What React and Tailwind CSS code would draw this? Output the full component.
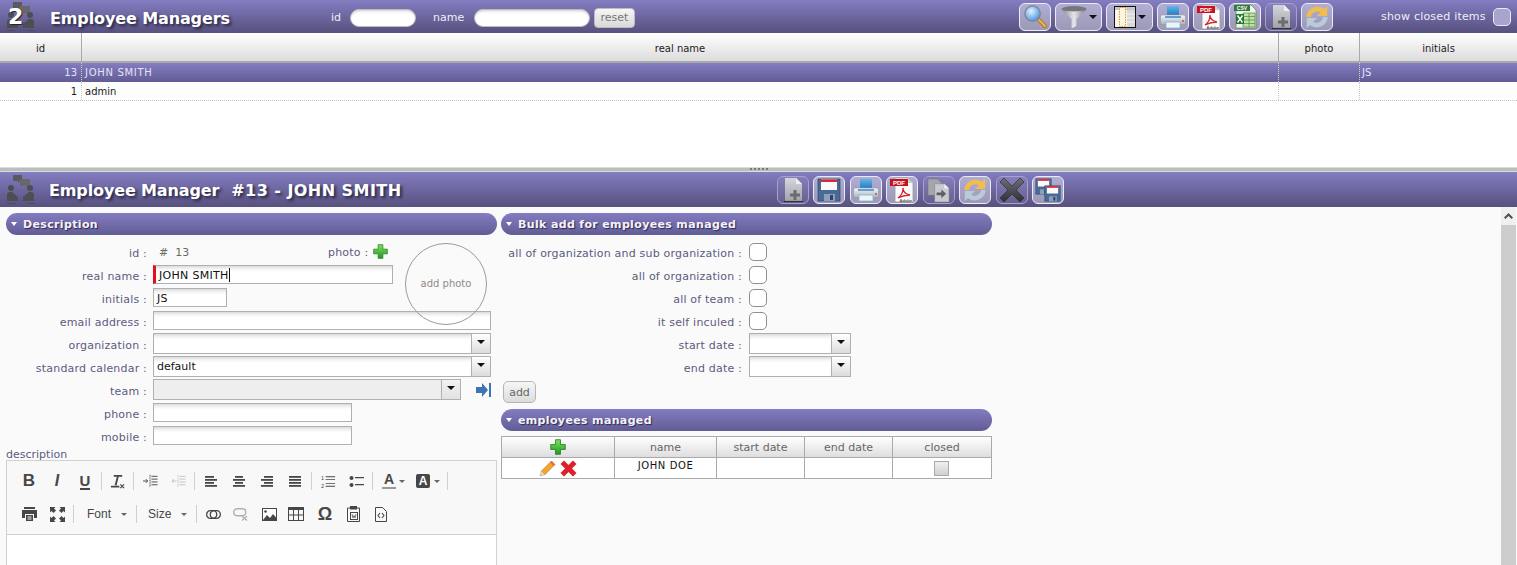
const purple = 'bg-linear-to-b from-[#837dc2] to-[#57517f]'
const softPurple = 'bg-linear-to-b from-[#837dc2] to-[#625c94]'
const titleShadow = '[text-shadow:2px_2px_3px_#26233f]'
const labelText = 'text-[11px] text-[#5c5a80] tracking-[.2px]'

function Plus({ className = 'w-4 h-4' }) {
  return (
    <svg viewBox="0 0 16 16" className={className}>
      <defs>
        <linearGradient id="plusg" x1="0" y1="0" x2="0" y2="1">
          <stop offset="0" stopColor="#7fe05a" />
          <stop offset="1" stopColor="#1f9a25" />
        </linearGradient>
      </defs>
      <path d="M5.500 .7h5v4.800h4.800v5h-4.800v4.800h-5v-4.800H.7v-5h4.800z" fill="url(#plusg)" stroke="#2a7a2a" strokeWidth=".8" />
    </svg>
  )
}

function Lens() {
  return (
    <svg viewBox="0 0 26 26" className="w-[25px] h-[25px]">
      <defs>
        <radialGradient id="lensg" cx=".4" cy=".35" r=".7">
          <stop offset="0" stopColor="#e4f3ff" />
          <stop offset="1" stopColor="#3f8fe0" />
        </radialGradient>
      </defs>
      <path d="M15 15l8 8" stroke="#b07a1c" strokeWidth="4" strokeLinecap="round" />
      <path d="M16.500 16.500l6.500 6.500" stroke="#f1b84a" strokeWidth="2" strokeLinecap="round" />
      <circle cx="10" cy="10" r="8" fill="url(#lensg)" stroke="#7d8aa0" strokeWidth="1.600" />
    </svg>
  )
}

function Funnel() {
  return (
    <svg viewBox="0 0 26 24" className="w-[26px] h-[24px]">
      <defs>
        <linearGradient id="fung" x1="0" y1="0" x2="1" y2="0">
          <stop offset="0" stopColor="#85838b" />
          <stop offset=".5" stopColor="#e6e6ea" />
          <stop offset="1" stopColor="#7a7980" />
        </linearGradient>
      </defs>
      <ellipse cx="13" cy="4" rx="12.500" ry="3" fill="#77767c" />
      <path d="M.5 4.500c2.500 2.500 4 4 10 9.500v9.500l5-2.500v-7c6-5.500 7.500-7 10-9.500-4 2.500-21 2.500-25 0z" fill="url(#fung)" />
    </svg>
  )
}

function Columns() {
  return (
    <svg viewBox="0 0 22 22" className="w-[22px] h-[22px]">
      <rect x=".5" y=".5" width="21" height="21" fill="#f6f6f2" stroke="#111" />
      <rect x="1" y="1" width="20" height="3" fill="#c9c9c9" />
      <rect x="13" y="4" width="8" height="17" fill="#d9d9d9" />
      <path d="M13 8h8M13 12h8M13 16h8" stroke="#f4f4f4" />
      <rect x="5.500" y="1.500" width="6" height="19" fill="#fbf6e2" stroke="#e29a1a" strokeDasharray="1.500 1" />
    </svg>
  )
}

function Printer() {
  return (
    <svg viewBox="0 0 26 24" className="w-[26px] h-[24px]">
      <defs>
        <linearGradient id="prg" x1="0" y1="0" x2="0" y2="1">
          <stop offset="0" stopColor="#62b4ea" />
          <stop offset="1" stopColor="#2a7cc0" />
        </linearGradient>
        <linearGradient id="prb" x1="0" y1="0" x2="0" y2="1">
          <stop offset="0" stopColor="#f5f7f8" />
          <stop offset="1" stopColor="#a9b4bc" />
        </linearGradient>
      </defs>
      <path d="M7 1h12v9H7z" fill="url(#prg)" />
      <path d="M2 10h22q1.500 0 1.500 2v6q0 1.500-1.500 1.500H2Q.5 19.500.5 18v-6q0-2 1.500-2z" fill="url(#prb)" stroke="#8b99a4" strokeWidth=".6" />
      <path d="M6 17h14v6H6z" fill="#eef3f6" stroke="#7fb2d6" strokeWidth=".8" />
      <path d="M5 12h16" stroke="#3a84c4" strokeWidth="1.500" />
      <circle cx="23" cy="16" r=".9" fill="#d33" />
    </svg>
  )
}

function Pdf() {
  return (
    <svg viewBox="0 0 26 26" className="w-[26px] h-[26px]">
      <path d="M6 1h13l5 5v19H6z" fill="#fbfbfb" stroke="#9b9b9b" strokeWidth=".8" />
      <path d="M19 1v5h5z" fill="#d0d0d0" />
      <rect x="1" y="2" width="18" height="7" fill="#c8131f" />
      <text x="10" y="8" textAnchor="middle" fontSize="6" fontWeight="700" fill="#fff" fontFamily="Liberation Sans, sans-serif">PDF</text>
      <path d="M9 21c3-2 5-6 5-10 0 4 2 6 7 7-4 0-8 1-12 3z" fill="none" stroke="#d3232c" strokeWidth="1.300" />
      <text x="23" y="25" textAnchor="end" fontSize="4" fontWeight="700" fill="#555" fontFamily="Liberation Sans, sans-serif">Adobe</text>
    </svg>
  )
}

function Csv() {
  return (
    <svg viewBox="0 0 26 26" className="w-[26px] h-[26px]">
      <path d="M4 1h15l5 5v18H4z" fill="#f3f6ee" stroke="#6d8c5d" strokeWidth=".8" />
      <rect x="2" y="1" width="16" height="6" fill="#2d7a3a" />
      <text x="10" y="6.300" textAnchor="middle" fontSize="5" fontWeight="700" fill="#fff" fontFamily="Liberation Sans, sans-serif">CSV</text>
      <path d="M11 9h12v14H11z" fill="#bfe0a8" stroke="#4f8a3f" strokeWidth=".7" />
      <path d="M11 12.500h12M11 16h12M11 19.500h12M17 9v14" stroke="#4f8a3f" strokeWidth=".7" />
      <path d="M4 10h8v10H4z" fill="#1f7a2f" />
      <path d="M5.500 11.500l5 7M10.500 11.500l-5 7" stroke="#fff" strokeWidth="1.400" />
    </svg>
  )
}

function NewDoc() {
  return (
    <svg viewBox="0 0 24 26" className="w-[24px] h-[26px]">
      <defs>
        <linearGradient id="ndg" x1="0" y1="0" x2="0" y2="1">
          <stop offset="0" stopColor="#d5d5dc" />
          <stop offset="1" stopColor="#a3a3ac" />
        </linearGradient>
      </defs>
      <path d="M4 1h11l6 6v17H4z" fill="url(#ndg)" />
      <path d="M15 1v6h6z" fill="#efeff2" />
      <path d="M3 24.500h19" stroke="#333" strokeWidth="1.200" />
      <path d="M12.500 13h3v3.500H19v3h-3.500V23h-3v-3.500H9v-3h3.500z" fill="#6c6c72" />
    </svg>
  )
}

function Refresh() {
  return (
    <svg viewBox="0 0 28 28" className="w-[26px] h-[26px]" fill="none">
      <path d="M5 14A9.500 9.500 0 0 1 20.500 7.500" stroke="#f2bd4f" strokeWidth="5" />
      <path d="M25 2v11H14z" fill="#f2bd4f" />
      <path d="M23 14A9.500 9.500 0 0 1 7.500 20.500" stroke="#b9cad9" strokeWidth="5" />
      <path d="M3 26V15h11z" fill="#b9cad9" />
    </svg>
  )
}

function Floppy({ className = 'w-[24px] h-[24px]' }) {
  return (
    <svg viewBox="0 0 24 24" className={className}>
      <path d="M1 1h22v22H1z" fill="#4a6a96" stroke="#2f4568" strokeWidth=".7" />
      <path d="M4 1.500h16V12H4z" fill="#fafafa" />
      <path d="M4 1.500h16V4H4z" fill="#d82a36" />
      <path d="M7 16h11v7H7z" fill="#8ba0bb" />
      <path d="M13 17h3v5h-3z" fill="#2f4568" />
    </svg>
  )
}

function CopyDoc() {
  return (
    <svg viewBox="0 0 26 26" className="w-[25px] h-[25px]">
      <path d="M2 1h10l4 4v13H2z" fill="#a5a5ae" stroke="#6f6f78" strokeWidth=".5" />
      <path d="M9 6h10l5 5v14H9z" fill="#c9c9d0" stroke="#77777f" strokeWidth=".5" />
      <path d="M19 6v5h5z" fill="#efeff2" />
      <path d="M11 15h5v-3l5 4.500-5 4.500v-3h-5z" fill="#5e5e66" />
    </svg>
  )
}

function BigX() {
  return (
    <svg viewBox="0 0 26 26" className="w-[26px] h-[26px]">
      <defs>
        <linearGradient id="bxg" x1="0" y1="0" x2="0" y2="1">
          <stop offset="0" stopColor="#6e6e76" />
          <stop offset="1" stopColor="#2e2e36" />
        </linearGradient>
      </defs>
      <path d="M5 1l8 8 8-8 4 4-8 8 8 8-4 4-8-8-8 8-4-4 8-8-8-8z" fill="url(#bxg)" stroke="#25252c" strokeWidth=".6" />
    </svg>
  )
}

function MultiSave() {
  return (
    <div className="relative w-[26px] h-[24px]">
      <Floppy className="absolute left-0 top-0 w-[17px] h-[17px]" />
      <Floppy className="absolute right-0 bottom-0 w-[17px] h-[17px]" />
    </div>
  )
}

function Caret({ className = 'border-t-[#111]' }) {
  return <span className={`w-0 h-0 border-x-[4px] border-x-transparent border-t-[4px] ${className}`} />
}

function SmallCaret({ className = '' }) {
  return <span className={`w-0 h-0 shrink-0 border-x-[3px] border-x-transparent border-t-[3px] border-t-[#666] ${className}`} />
}

function ToolBtn({ children, dim, wide }) {
  return (
    <div className={`${wide ? 'w-[47px] gap-[2px]' : 'w-[32px]'} h-[28px] rounded-[6px] border flex items-center justify-center shrink-0 ${dim ? 'border-[#a6a2cb] bg-[#ffffff10]' : 'border-[#ecebf5] bg-[#ffffff66]'}`}>
      {children}
    </div>
  )
}

function PeopleIcon() {
  return (
    <svg viewBox="0 0 30 30" className="w-[30px] h-[30px]" fill="#4e4e52">
      <path d="M7 0h9v6h-2l-2 2V6H7z" fill="#5a5a5e" />
      <path d="M14 4h10v7h-2v2l-2-2h-6z" fill="#68686c" />
      <circle cx="5" cy="13" r="3" />
      <circle cx="24" cy="13" r="3" />
      <path d="M1 26v-6q0-3 3-3h2l6 5v4z" />
      <path d="M28 26v-6q0-3-3-3h-2l-6 5v4z" />
      <path d="M1 28h8v1H1zM21 28h8v1h-8z" />
      <circle cx="14.500" cy="25" r=".6" />
    </svg>
  )
}

function ColHead({ className, children }) {
  return (
    <div className={`h-full flex items-center justify-center pt-[3px] text-[10px] text-[#222] border-r border-[#a9a9a9] last:border-r-0 ${className}`}>
      {children}
    </div>
  )
}

function GridRow({ id, name, initials, selected }) {
  const cell = selected ? 'border-[#d9d2b0]' : 'border-[#c8c4b8]'
  return (
    <div className={`flex h-[19px] text-[10px] ${selected ? `${softPurple} text-[#e6e4f4]` : 'bg-[#fdfdfd] text-[#222] border-b border-dotted border-[#c8c4b8]'}`}>
      <div className={`w-[82px] pr-[4px] text-right leading-[19px] border-r border-dotted ${cell}`}>{id}</div>
      <div className={`flex-1 pl-[3px] leading-[19px] border-r border-dotted ${cell} ${selected ? 'tracking-[.7px]' : ''}`}>{name}</div>
      <div className={`w-[81px] border-r border-dotted ${cell}`} />
      <div className="w-[157px] pl-[2px] leading-[19px]">{initials}</div>
    </div>
  )
}

function Section({ title }) {
  return (
    <div className={`h-[22px] rounded-[11px] ${softPurple} flex items-center pl-[5px] text-[11px] font-bold text-[#f4f3fb] tracking-[.35px] [text-shadow:1px_1px_1px_#2e2a50]`}>
      <span className="w-0 h-0 border-x-[3px] border-x-transparent border-t-[4px] border-t-white mr-[6px]" />
      <span className="pt-[2px]">{title}</span>
    </div>
  )
}

function Field({ className = '', children, required }) {
  return (
    <div className={`h-[19px] border border-[#b0b0b0] bg-white shadow-[inset_0_5px_5px_-4px_#c8c8c8] text-[11px] tracking-[.3px] text-[#111] leading-[17px] pl-[4px] pt-[1px] flex items-center ${required ? 'border-l-[3px] border-l-[#e0101c]' : ''} ${className}`}>
      {children}
    </div>
  )
}

function Select({ className = '', value, disabled, arrowBg = 'from-white to-[#dcdcdc]' }) {
  return (
    <div className={`h-[21px] border border-[#b0b0b0] flex text-[11px] text-[#111] ${disabled ? 'bg-[#eeeeee]' : 'bg-white shadow-[inset_0_5px_5px_-4px_#c8c8c8]'} ${className}`}>
      <div className="flex-1 pl-[3px] leading-[20px]">{value}</div>
      <div className={`w-[19px] border-l border-[#b0b0b0] bg-linear-to-b ${arrowBg} flex items-center justify-center pb-[3px]`}>
        <Caret />
      </div>
    </div>
  )
}

function FormRow({ label, children }) {
  return (
    <div className="h-[23px] flex items-center">
      <div className={`w-[141px] pt-[5px] text-right shrink-0 ${labelText}`}>{label} :</div>
      <div className="ml-[6px] flex items-center flex-1">{children}</div>
    </div>
  )
}

function BulkRow({ label, children }) {
  return (
    <div className="h-[23px] flex items-center">
      <div className={`w-[241px] pt-[5px] text-right shrink-0 ${labelText}`}>{label} :</div>
      <div className="ml-[7px] flex items-center">{children}</div>
    </div>
  )
}

function Check() {
  return <div className="w-[18px] h-[18px] mt-[1px] rounded-[5px] border border-[#8f8f8f] bg-white" />
}

function Lines({ rows }) {
  return (
    <svg viewBox="0 0 14 14" className="w-[14px] h-[14px]" fill="#474747">
      {rows.map((r, i) => (
        <rect key={i} x={r[0]} y={r[1]} width={r[2]} height="1.800" />
      ))}
    </svg>
  )
}

function Ed({ children, w = 'w-[28px]' }) {
  return <div className={`${w} h-[24px] flex items-center justify-center shrink-0`}>{children}</div>
}

function Sep({ ml = '' }) {
  return <div className={`w-px h-[18px] bg-[#cfcfcf] shrink-0 ${ml}`} />
}

function Indent({ faded, out }) {
  return (
    <svg viewBox="0 0 16 14" className={`w-[15px] h-[14px] ${faded ? 'opacity-30' : ''}`} fill="none" stroke="#474747" strokeWidth="1">
      <path d="M7.500 .5v13" strokeDasharray="1.200 .6" />
      <path d="M9 2h6.500M9 5h6.500M9 8h6.500M9 11h6.500" />
      {out ? <path d="M6 7H1M3 5L1 7l2 2" /> : <path d="M0 7h5M3 5l2 2-2 2" />}
    </svg>
  )
}

function EditorToolbar() {
  const glyph = "font-['Liberation_Sans'] font-bold text-[#474747]"
  return (
    <div className="h-[74px] bg-[#f8f8f8] border-b border-[#d1d1d1] pl-[8px] pt-[8px] flex flex-col gap-[9px] text-[#474747]">
      <div className="flex items-center">
        <Ed><span className={`${glyph} text-[17px]`}>B</span></Ed>
        <Ed><span className={`${glyph} text-[16px] italic`}>I</span></Ed>
        <Ed><span className={`${glyph} text-[15px] leading-[15px] border-b-2 border-[#474747]`}>U</span></Ed>
        <Sep ml="ml-[2px]" />
        <Ed w="w-[31px]">
          <svg viewBox="0 0 16 16" className="w-[15px] h-[15px]" fill="none" stroke="#474747">
            <path d="M4 2h9M8.500 2L6 12M1 13.500h9" strokeWidth="2" />
            <path d="M11 11l4 4M15 11l-4 4" strokeWidth="1.300" />
          </svg>
        </Ed>
        <Sep />
        <Ed w="w-[32px]"><Indent /></Ed>
        <Ed w="w-[24px]"><Indent faded out /></Ed>
        <Sep ml="ml-[4px]" />
        <div className="ml-[2px] flex">
          <Ed><Lines rows={[[1, 2, 9], [1, 5, 12], [1, 8, 9], [1, 11, 12]]} /></Ed>
          <Ed><Lines rows={[[3, 2, 8], [1, 5, 12], [3, 8, 8], [1, 11, 12]]} /></Ed>
          <Ed><Lines rows={[[4, 2, 9], [1, 5, 12], [4, 8, 9], [1, 11, 12]]} /></Ed>
          <Ed><Lines rows={[[1, 2, 12], [1, 5, 12], [1, 8, 12], [1, 11, 12]]} /></Ed>
        </div>
        <Sep ml="ml-[2px]" />
        <Ed w="w-[32px]">
          <svg viewBox="0 0 16 14" className="w-[15px] h-[14px]" fill="#474747">
            <text x="0" y="6" fontSize="6" fontFamily="Liberation Sans, sans-serif">1</text>
            <text x="0" y="14" fontSize="6" fontFamily="Liberation Sans, sans-serif">2</text>
            <path d="M5 2h10v1H5zM5 5h10v1H5zM5 9h10v1H5zM5 12h10v1H5z" />
          </svg>
        </Ed>
        <Ed w="w-[24px]">
          <svg viewBox="0 0 15 13" className="w-[15px] h-[13px]" fill="#474747">
            <circle cx="2.500" cy="3" r="2" />
            <circle cx="2.500" cy="10" r="2" />
            <path d="M6 2h9v1.200H6zM6 9h9v1.200H6z" />
          </svg>
        </Ed>
        <Sep ml="ml-[4px]" />
        <div className={`ml-[9px] w-[14px] text-center text-[14px] leading-[13px] border-b-2 border-[#9a9a9a] pb-[1px] shrink-0 ${glyph}`}>A</div>
        <SmallCaret className="ml-[3px]" />
        <div className="ml-[11px] w-[14px] h-[14px] rounded-[2px] bg-[#474747] text-white text-[12px] leading-[14px] text-center font-bold font-['Liberation_Sans'] shrink-0">A</div>
        <SmallCaret className="ml-[4px]" />
        <Sep ml="ml-[7px]" />
      </div>
      <div className="flex items-center">
        <Ed>
          <svg viewBox="0 0 15 14" className="w-[15px] h-[14px]" fill="#474747">
            <path d="M2 0h11v2H2zM0 3h15v8h-3V7H3v4H0zM4 8h7v6H4z" />
            <path d="M5.500 10h4M5.500 12h4" stroke="#f8f8f8" />
          </svg>
        </Ed>
        <Ed>
          <svg viewBox="0 0 15 15" className="w-[15px] h-[15px]" fill="#474747">
            <path d="M0 0h5.500L4 1.500l2 2L3.500 6l-2-2L0 5.500zM15 0v5.500L13.500 4l-2 2L9 3.500l2-2L9.500 0zM0 15V9.500L1.500 11l2-2L6 11.500l-2 2L5.500 15zM15 15H9.500L11 13.500l-2-2L11.500 9l2 2L15 9.500z" />
          </svg>
        </Ed>
        <Sep ml="ml-[2px]" />
        <span className="ml-[13px] w-[34px] font-['Liberation_Sans'] text-[12px] shrink-0">Font</span>
        <SmallCaret />
        <Sep ml="ml-[9px]" />
        <span className="ml-[11px] w-[33px] font-['Liberation_Sans'] text-[12px] shrink-0">Size</span>
        <SmallCaret />
        <Sep ml="ml-[9px]" />
        <Ed w="w-[32px]">
          <svg viewBox="0 0 15 9" className="w-[15px] h-[9px]" fill="none" stroke="#474747" strokeWidth="1.300">
            <rect x=".7" y=".7" width="10" height="7.600" rx="3.600" />
            <rect x="4.300" y=".7" width="10" height="7.600" rx="3.600" />
          </svg>
        </Ed>
        <Ed w="w-[22px]">
          <svg viewBox="0 0 15 14" className="w-[15px] h-[14px] opacity-40" fill="none" stroke="#474747" strokeWidth="1.400">
            <rect x=".7" y="1.700" width="12" height="7" rx="3.400" />
            <path d="M9 9l5 4.500M14 9l-5 4.500" />
          </svg>
        </Ed>
        <Ed w="w-[36px]">
          <svg viewBox="0 0 15 13" className="w-[15px] h-[13px]">
            <rect x=".5" y=".5" width="14" height="12" fill="#fff" stroke="#474747" />
            <path d="M1 12l4-5 3 3 3-4 3 3.500V12z" fill="#474747" />
            <circle cx="3.500" cy="3.500" r="1.300" fill="#474747" />
          </svg>
        </Ed>
        <Ed w="w-[18px]">
          <svg viewBox="0 0 16 14" className="w-[16px] h-[14px] shrink-0" fill="none" stroke="#474747">
            <rect x=".5" y=".5" width="15" height="13" />
            <path d="M0 1.500h16" strokeWidth="3" />
            <path d="M0 8h16M5.500 3v11M10.500 3v11" />
          </svg>
        </Ed>
        <Ed w="w-[40px]"><span className={`${glyph} text-[18px] leading-[18px]`}>Ω</span></Ed>
        <Ed w="w-[16px]">
          <svg viewBox="0 0 13 16" className="w-[13px] h-[16px] shrink-0" fill="none" stroke="#474747">
            <path d="M3 2H.5v13.500h12V2H10" />
            <rect x="3.500" y=".5" width="6" height="2.500" fill="#474747" />
            <rect x="3.500" y="6.500" width="7" height="7" />
            <path d="M5 8l1 4 1-2.500L8 12l1-4" strokeWidth=".7" />
          </svg>
        </Ed>
        <Ed w="w-[40px]">
          <svg viewBox="0 0 12 15" className="w-[12px] h-[15px]" fill="none" stroke="#474747">
            <path d="M.5.5h7l4 4v10H.5z" />
            <path d="M5 6L3 8.500 5 11M7 6l2 2.500L7 11" strokeWidth="1.100" />
          </svg>
        </Ed>
      </div>
    </div>
  )
}

function ManagedTable() {
  const th = 'h-full flex items-center justify-center pt-[3px] border-r border-[#aaaaaa] last:border-r-0'
  const td = 'h-full border-r border-[#aaaaaa] last:border-r-0'
  return (
    <div className="mt-[5px] border border-[#aaaaaa] text-[11px]">
      <div className="h-[21px] flex bg-linear-to-b from-white to-[#dedede] border-b border-[#aaaaaa] text-[#666]">
        <div className="h-full flex items-center justify-center border-r border-[#aaaaaa] w-[113px]"><Plus className="w-[16px] h-[16px]" /></div>
        <div className={`${th} w-[102px]`}>name</div>
        <div className={`${th} w-[88px]`}>start date</div>
        <div className={`${th} w-[88px]`}>end date</div>
        <div className={`${th} flex-1`}>closed</div>
      </div>
      <div className="h-[20px] flex bg-white">
        <div className={`${td} w-[113px] flex items-center justify-center gap-[4px]`}>
          <svg viewBox="0 0 17 17" className="w-[17px] h-[17px]">
            <path d="M12.500 1l3.500 3.500L6 14.500 2.500 11z" fill="#f2a632" stroke="#c47a16" strokeWidth=".7" />
            <path d="M12.500 1l3.500 3.500-1.500 1.500L11 2.500z" fill="#e86a4a" />
            <path d="M2.500 11L1 16l5-1.500z" fill="#f3dcb4" stroke="#b08a50" strokeWidth=".5" />
          </svg>
          <svg viewBox="0 0 17 17" className="w-[17px] h-[17px]">
            <path d="M4 .8l4.500 4.500L13 .8l3.200 3.200-4.500 4.500 4.500 4.500-3.200 3.200-4.500-4.500L4 16.200.8 13l4.500-4.500L.8 4z" fill="#e01f28" stroke="#b5141c" strokeWidth=".5" />
          </svg>
        </div>
        <div className={`${td} w-[102px] text-center text-[10px] tracking-[.6px] text-[#111] leading-[15px]`}>JOHN DOE</div>
        <div className={`${td} w-[88px]`} />
        <div className={`${td} w-[88px]`} />
        <div className={`${td} flex-1 flex items-center justify-center pr-[2px]`}>
          <div className="w-[15px] h-[15px] border border-[#a9a9a9] bg-linear-to-b from-[#f0f0f0] to-[#cfcfcf]" />
        </div>
      </div>
    </div>
  )
}

export default function App() {
  return (
    <div className="h-screen overflow-hidden flex flex-col bg-white [font-family:'DejaVu_Sans',Verdana,sans-serif]">
      {/* list header */}
      <div className={`h-[33px] shrink-0 ${purple} flex items-center text-[11px] text-[#efeef8]`}>
        <div className="relative w-[36px] ml-[6px] shrink-0">
          <PeopleIcon />
          <span className="absolute left-[2px] top-[4px] text-[22px] leading-[22px] font-bold text-white [text-shadow:1px_1px_1px_#222]">2</span>
        </div>
        <div className={`ml-[8px] pt-[4px] w-[281px] text-[16px] tracking-[-.12px] font-bold text-white shrink-0 ${titleShadow}`}>Employee Managers</div>
        <span className="w-[19px] pt-[4px]">id</span>
        <div className="w-[66px] h-[18px] mt-[2px] rounded-full bg-white border border-[#bbb] shadow-[inset_0_3px_3px_-2px_#ccc]" />
        <span className="ml-[17px] w-[41px] pt-[4px]">name</span>
        <div className="w-[116px] h-[18px] mt-[2px] rounded-full bg-white border border-[#bbb] shadow-[inset_0_3px_3px_-2px_#ccc]" />
        <div className="ml-[4px] mt-[2px] w-[41px] h-[20px] rounded-[4px] border border-[#bdbdbd] bg-linear-to-b from-[#f6f6f6] to-[#d8d8d8] text-[#777] text-center leading-[18px]">reset</div>
        <div className="ml-[384px] flex items-center gap-[4px]">
          <ToolBtn><Lens /></ToolBtn>
          <ToolBtn wide><Funnel /><Caret /></ToolBtn>
          <ToolBtn wide><Columns /><Caret /></ToolBtn>
          <ToolBtn><Printer /></ToolBtn>
          <ToolBtn><Pdf /></ToolBtn>
          <ToolBtn><Csv /></ToolBtn>
          <ToolBtn dim><NewDoc /></ToolBtn>
          <ToolBtn><Refresh /></ToolBtn>
        </div>
        <span className="ml-[48px] w-[112px] pt-[2px] tracking-[.2px] whitespace-nowrap">show closed items</span>
        <div className="w-[18px] h-[18px] mt-[1px] rounded-[5px] border border-[#e9e8f3] bg-[#a7a4cd]" />
      </div>

      {/* list */}
      <div className="h-[30px] shrink-0 flex bg-linear-to-b from-white to-[#dcdcdc] border-b-2 border-[#a9a9a9]">
        <ColHead className="w-[82px]">id</ColHead>
        <ColHead className="flex-1">real name</ColHead>
        <ColHead className="w-[81px]">photo</ColHead>
        <ColHead className="w-[157px]">initials</ColHead>
      </div>
      <GridRow id="13" name="JOHN SMITH" initials="JS" selected />
      <GridRow id="1" name="admin" />
      <div className="h-[66px] shrink-0 bg-white" />

      {/* splitter */}
      <div className="h-[5px] shrink-0 bg-[#bdbdbd] border-y border-[#dcdcdc] flex justify-center items-start gap-[2px]">
        {[0, 1, 2, 3, 4].map((i) => <span key={i} className="w-[2px] h-[2px] bg-[#777]" />)}
      </div>

      {/* detail header */}
      <div className={`h-[35px] shrink-0 ${purple} flex items-center`}>
        <div className="ml-[6px] w-[30px] shrink-0"><PeopleIcon /></div>
        <div className={`ml-[13px] pt-[2px] w-[728px] shrink-0 text-[16px] font-bold text-white whitespace-pre ${titleShadow}`}>
          <span className="tracking-[-.13px]">Employee Manager</span>
          <span className="ml-[12px] tracking-[.45px]">#13 - JOHN SMITH</span>
        </div>
        <div className="mt-[1px] flex items-center gap-[4.43px]">
          <ToolBtn dim><NewDoc /></ToolBtn>
          <ToolBtn><Floppy /></ToolBtn>
          <ToolBtn><Printer /></ToolBtn>
          <ToolBtn><Pdf /></ToolBtn>
          <ToolBtn dim><CopyDoc /></ToolBtn>
          <ToolBtn><Refresh /></ToolBtn>
          <ToolBtn dim><BigX /></ToolBtn>
          <ToolBtn><MultiSave /></ToolBtn>
        </div>
      </div>

      {/* detail */}
      <div className="flex-1 min-h-0 flex bg-[#fafafa]">
        <div className="flex-1 min-w-0 flex gap-[4px] pl-[6px] pt-[6px] overflow-hidden">
          <div className="relative w-[491px] shrink-0">
            <Section title="Description" />
            <div className="pt-[5px]">
              <div className="h-[23px] flex items-center">
                <div className={`w-[141px] pt-[5px] text-right shrink-0 ${labelText}`}>id :</div>
                <div className="ml-[12px] pt-[3px] w-[163px] text-[11px] text-[#6d6a62] whitespace-pre">#  13</div>
                <div className={`ml-[6px] pt-[3px] ${labelText}`}>photo :</div>
                <Plus className="ml-[5px] w-[15px] h-[15px]" />
              </div>
              <FormRow label="real name">
                <Field required className="w-[240px] !pl-[3px]">JOHN SMITH<span className="w-px h-[14px] bg-[#111]" /></Field>
              </FormRow>
              <FormRow label="initials"><Field className="w-[74px] !pl-[3px]">JS</Field></FormRow>
              <FormRow label="email address"><Field className="w-[338px]" /></FormRow>
              <FormRow label="organization"><Select className="w-[338px]" /></FormRow>
              <FormRow label="standard calendar"><Select className="w-[338px]" value="default" /></FormRow>
              <FormRow label="team">
                <Select className="w-[308px]" disabled arrowBg="from-[#f2f2f2] to-[#e2e2e2]" />
                <svg viewBox="0 0 15 14" className="ml-[15px] w-[15px] h-[14px]" fill="#3f74b4">
                  <path d="M0 4h6V0l6 7-6 7v-4H0zM13 0h2v14h-2z" />
                </svg>
              </FormRow>
              <FormRow label="phone"><Field className="w-[199px]" /></FormRow>
              <FormRow label="mobile"><Field className="w-[199px]" /></FormRow>
            </div>
            {/* photo circle lies over the form */}
            <div className="absolute left-[399px] top-[30px] w-[82px] h-[82px] rounded-full border border-[#9a9a9a] flex items-center justify-center pb-[2px] text-[10px] text-[#8f8a88]">add photo</div>
            <div className="h-[13px] text-[11px] leading-[16px] text-[#5c5a80]">description</div>
            <div className="h-[140px] border border-[#d1d1d1] bg-white">
              <EditorToolbar />
            </div>
          </div>

          <div className="w-[491px] shrink-0">
            <Section title="Bulk add for employees managed" />
            <div className="pt-[5px]">
              <BulkRow label="all of organization and sub organization"><Check /></BulkRow>
              <BulkRow label="all of organization"><Check /></BulkRow>
              <BulkRow label="all of team"><Check /></BulkRow>
              <BulkRow label="it self inculed"><Check /></BulkRow>
              <BulkRow label="start date"><Select className="w-[102px]" /></BulkRow>
              <BulkRow label="end date"><Select className="w-[102px]" /></BulkRow>
            </div>
            <div className="mt-[3px] ml-[2px] w-[33px] h-[22px] rounded-[5px] border border-[#b5b5b5] bg-linear-to-b from-[#f6f6f6] to-[#dcdcdc] text-[11px] text-[#666] text-center leading-[21px]">add</div>
            <div className="mt-[6px]"><Section title="employees managed" /></div>
            <ManagedTable />
          </div>
        </div>

        <div className="w-[15px] mr-px shrink-0 flex flex-col bg-[#cdcdcd]">
          <div className="h-[18px] bg-[#f0f0f0] flex items-center justify-center">
            <svg viewBox="0 0 9 6" className="w-[9px] h-[6px]" fill="none" stroke="#505050" strokeWidth="2"><path d="M.7 5.300l3.800-3.800 3.800 3.800" /></svg>
          </div>
        </div>
      </div>
    </div>
  )
}
